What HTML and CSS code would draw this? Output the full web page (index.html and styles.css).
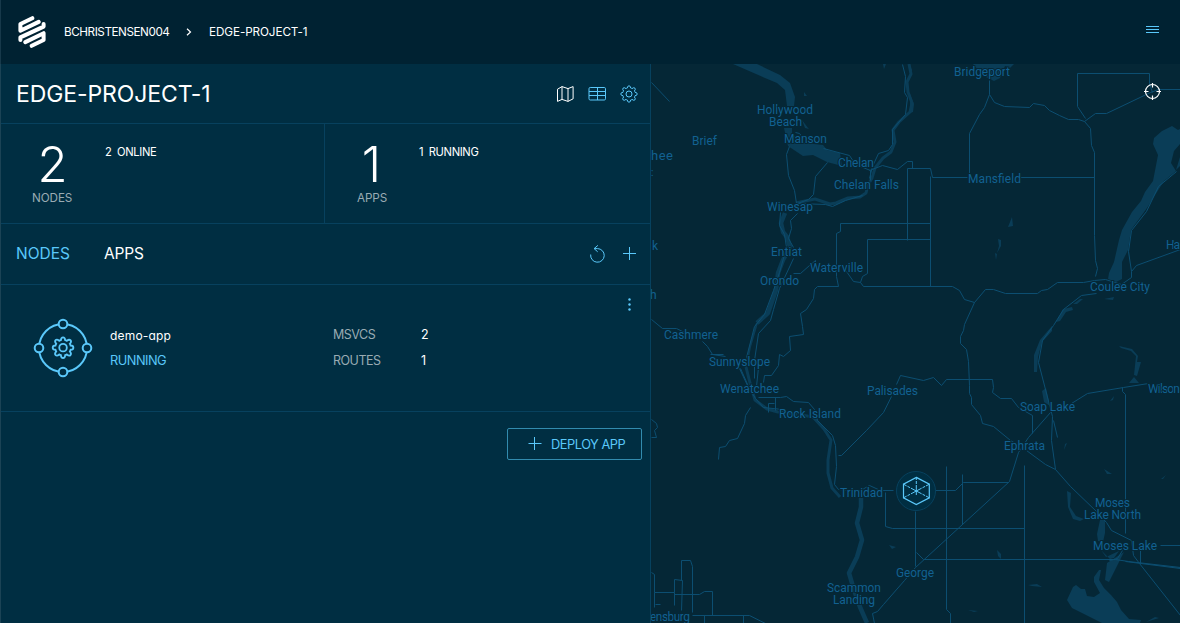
FILE: index.html
```html
<!DOCTYPE html>
<html lang="en">
<head>
<meta charset="utf-8">
<title>EDGE-PROJECT-1</title>
<link rel="stylesheet" href="styles.css">
</head>
<body>
<div class="app">
  <header class="topbar">
    <svg class="logo" viewBox="0 0 28 32" width="28" height="32"><path d="M14.3 2.2 2.4 8V14.8L20.7 5.9M2.4 24V21.4L25.6 10.6V8M7.3 26.1 25.6 17.2V24L13.7 29.8"/></svg>
    <nav class="crumbs">
      <span class="crumb-user">BCHRISTENSEN004</span>
      <svg class="chevron" viewBox="0 0 6 8" width="6" height="8"><path d="M1 .7 4.5 4 1 7.3"/></svg>
      <span class="crumb-project">EDGE-PROJECT-1</span>
    </nav>
    <svg class="menu" viewBox="0 0 13 8" width="13" height="8"><path d="M0 .5H13M0 3.5H13M0 6.5H13"/></svg>
  </header>
  <main class="body">
    <section class="panel">
      <div class="title-row">
        <h1>EDGE-PROJECT-1</h1>
        <div class="views">
          <svg class="icon icon-map" viewBox="0 0 18 18" width="18" height="18"><path d="M1.5 4.2 6 1.6 12 3.6 17.1 1.6V13.8L12 16.4 6 14.4 1.5 16.4ZM6 1.6V14.4M12 3.6V16.4"/></svg>
          <svg class="icon" viewBox="0 0 18 18" width="18" height="18"><rect x="1" y="2.5" width="16.5" height="12.5" rx="1.2"/><path d="M1 6.5H17.5M1 10.5H17.5M9.5 2.5V15"/></svg>
          <svg class="icon" viewBox="0 0 18 18" width="18" height="18"><use href="#gear"/></svg>
        </div>
      </div>
      <div class="stats">
        <div class="stat">
          <div class="total"><strong>2</strong><span class="label">NODES</span></div>
          <span class="detail">2&nbsp; ONLINE</span>
        </div>
        <div class="stat">
          <div class="total"><strong>1</strong><span class="label">APPS</span></div>
          <span class="detail">1&nbsp; RUNNING</span>
        </div>
      </div>
      <div class="tabs">
        <span class="tab tab-active">NODES</span>
        <span class="tab">APPS</span>
        <div class="actions">
          <svg class="icon" viewBox="0 0 18 18" width="18" height="18"><path d="M2.7 9.5A6.8 6.8 0 1 0 9.5 3.6H6.1M9.9 .4 6.1 3.6 9.7 6.8"/></svg>
          <svg class="icon" viewBox="0 0 18 18" width="18" height="18"><path d="M3 8.5H16M9.5 2V15"/></svg>
        </div>
      </div>
      <article class="app-row">
        <svg class="app-icon" viewBox="0 0 60 60" width="60" height="60">
          <circle cx="30" cy="30" r="24"/>
          <g class="hub"><circle cx="30" cy="6" r="4.3"/><circle cx="54" cy="30" r="4.3"/><circle cx="30" cy="54" r="4.3"/><circle cx="6" cy="30" r="4.3"/></g>
          <g transform="translate(18.7 18.3) scale(1.26)"><path id="gear" d="M7.3 3 Q7.5 .8 9 .8T10.7 3Q11.4 3.2 12 3.6 13.8 2.1 14.9 3.1T14.4 6Q14.8 6.6 15 7.3 17.2 7.4 17.2 9T15 10.7Q14.8 11.4 14.4 12 15.9 13.8 14.9 14.9T12 14.4Q11.4 14.8 10.7 15 10.6 17.2 9 17.2T7.3 15Q6.6 14.8 6 14.4 4.2 15.9 3.1 14.9T3.6 12Q3.2 11.4 3 10.7 .8 10.6 .8 9T3 7.3Q3.2 6.6 3.6 6 2.1 4.2 3.1 3.1T6 3.6Q6.6 3.2 7.3 3ZM6 9a3 3 0 1 0 6 0a3 3 0 1 0-6 0"/></g>
        </svg>
        <div class="app-id"><span class="app-name">demo-app</span><span class="state">RUNNING</span></div>
        <dl class="facts"><dt>MSVCS</dt><dd>2</dd><dt>ROUTES</dt><dd>1</dd></dl>
        <svg class="more" viewBox="0 0 4 14" width="4" height="14"><circle cx="2.5" cy="2.5" r="1.2"/><circle cx="2.5" cy="7.5" r="1.2"/><circle cx="2.5" cy="12.5" r="1.2"/></svg>
      </article>
      <div class="footer">
        <button class="deploy"><svg class="icon" viewBox="0 0 14 14" width="14" height="14"><path d="M.5 6.5H13.5M6.5 0V13"/></svg><span>DEPLOY APP</span></button>
      </div>
    </section>
    <section class="map">
      <svg class="canvas" viewBox="651 64 529 559" width="529" height="559">
        <g class="water">
          <path d="M733 64H757L780 75 790 83 795 97 794 106H787L785 90 777 83 765 78Z"/>
          <path d="M784 128H792V134L805 143 823 145 827 150 840 153 842 166 827 162 813 155 803 156 788 146Z"/>
          <path d="M802 120 808 128 809 129 805 128ZM804 92 807 96H804ZM883 64H886L884 69Z"/>
          <path d="M973 64H1014L1010 68 1005 66 1000 78 994 81 986 77 978 70ZM910 66 912 70 911 77 910 77ZM910 94 914 104 913 112 910 113Z"/>
          <path d="M1162 131 1172 126 1178 130 1180 129V144L1174 151 1171 163 1176 171 1164 181 1155 195 1147 208 1131 230 1128 250 1122 262 1122 279 1116 282 1108 279 1109 273 1114 262 1119 240 1122 230 1132 212 1141 201 1145 192 1153 181 1158 155 1153 144 1154 138ZM1180 157 1176 170 1180 166Z"/>
          <path d="M1012 217 1013 226 1008 227ZM998 239 1001 240 1001 246 997 253 999 246ZM995 253 997 254 996 260Z"/>
          <path d="M1034 355 1040 340 1052 326 1052 331 1042 342 1038 357 1037 372H1034ZM1056 322 1063 309 1072 307 1073 310 1066 312 1060 321ZM1073 304 1080 299 1083 299 1077 304ZM1042 391 1046 388 1050 406 1044 402ZM1104 299 1114 297 1113 300Z"/>
          <path d="M1119 346 1132 349 1138 356 1137 362 1141 362 1137 376 1134 375 1136 356 1131 351 1121 348ZM1129 383 1134 377 1139 383ZM1110 401 1114 396 1113 400Z"/>
          <path d="M1067 491 1071 493 1070 507 1076 516 1084 519 1080 521 1073 519 1068 507ZM1100 520 1105 520 1105 533 1103 542 1098 541 1097 534ZM1101 550 1106 557 1119 551 1114 558 1110 559ZM1107 563 1124 552 1120 560 1109 582 1105 580Z"/>
          <path d="M1073 587 1076 585 1081 589 1085 589 1087 596 1094 597 1100 593 1094 582 1094 577 1099 570 1101 570 1099 580 1104 588 1111 595 1117 602 1121 610 1129 619 1141 620 1140 623H1102L1086 615 1072 608 1067 600Z"/>
          <path d="M997 550 1001 554V559L998 556ZM1028 585 1037 584 1042 587 1032 586ZM889 545 896 547 892 549ZM1065 444 1067 443 1064 450ZM1104 469 1112 474H1107ZM1161 479 1166 475 1163 479ZM1155 617 1159 618 1146 622ZM968 610 978 611 974 612Z"/>
        </g>
        <g class="river">
          <path d="M909 64 911 74 907 82 908 92 912 103 910 112 899 122 893 130 895 142 891 152 883 158 875 168 872 178 868 185 866 193 860 197 848 198 836 203 830 204 815 199 805 201 796 203"/>
          <path class="wide" d="M785 213 781 223 783 232 787 237 790 247 783 260 778 273 776 290 768 313 757 323"/>
          <path class="thin" d="M757 323 750 347 746 367"/>
          <path d="M746 367 750 383 755 400 767 409 778 412 795 414 813 417 824 429 831 440 828 460 828 473 832 488 840 497"/>
          <path class="wide" d="M861 498 861 507 857 523 862 540 857 557 849 573 854 590 860 607 867 623"/>
        </g>
        <g class="roads" transform="translate(.5 .5)">
          <path d="M651 82 669 101M902 64 905 76 904 92 907 97 905 114 892 129 892 144 888 150 878 153 872 166 869 178M789 146 786 154 788 175 794 190 796 203M827 162 815 176 813 194 808 199 797 203 825 204 832 206 845 200 862 195M869 170 882 165 897 169 907 161 912 161V168"/>
          <path d="M795 132 799 133 803 138M823 148 849 155 855 164 870 170 870 180M797 213 790 220 791 228 788 238 793 247M780 212 779 225 784 234 786 247 779 272 773 290 764 314 754 326 746 357M793 258 779 288 773 309 770 320 758 333 754 360 754 378M793 273 800 273 809 265 815 260 815 265"/>
          <path d="M907 168H930L932 177H967M1020 177H1094M907 168V240M930 176V286M930 223H840V231L836 233V276L838 286M930 239H867V273L862 276 860 282 853 281 846 271M860 282 863 286H952L959 290 964 299 974 302 985 289 993 289 1005 293H1037L1041 290 1047 289 1057 282 1083 282 1094 280 1105 279 1121 284 1131 277 1131 271 1136 265 1180 249"/>
          <path d="M838 286H817L814 289 813 298 806 309 800 313 802 326 803 334 789 336 790 350 783 356 779 354 778 365 771 375H764L763 382M651 319 662 328H676L686 333M702 341 707 346 712 354 725 356M710 354 723 354M739 368 747 385 755 398 763 407 782 409M740 368 748 386M758 367 756 386M758 397H780L786 396 793 401 808 402 814 409 817 420 832 435 835 445 836 466 834 484 838 489 860 490 869 485 880 490H893M935 490H955L963 482H1008"/>
          <path d="M768 412V403H774M775 397V410M750 407 745 415 744 423 737 438 729 440 725 446 719 447 718 459M651 419 656 423 657 427 654 430 656 437 651 437M838 455 841 455 866 430 883 412 891 396M896 384 900 375 923 380 933 377 941 385 946 379H992L993 387 992 392 1000 398H1011L1018 407 1032 415V433"/>
          <path d="M989 80V94L994 102 1004 106 1029 107 1033 103 1044 105 1049 110 1059 115 1068 119 1078 119 1084 121 1090 128 1091 145 1094 152V235L1095 260 1097 268 1095 276M989 94 984 107 979 114 969 133V177M1077 106V73H1149V83L1152 92M1077 106 1085 118M1084 121 1095 113H1106L1150 92 1158 89H1180"/>
          <path d="M974 302 964 324 963 330 960 336 960 343 966 349 968 361 969 385V393L971 397V404L980 415 982 423 993 426 1010 440 1015 443M1131 230 1128 251 1131 271M1176 171 1158 186 1146 211 1131 230M1096 293 1081 295 1063 309 1053 325 1042 340 1038 362 1052 416 1051 440 1055 469M1071 403 1087 393 1123 387 1148 383M1122 387V391L1125 394V533"/>
          <path d="M1050 412 1028 437 1018 452 1009 481 915 567 904 580 883 604 877 611 872 613 874 623M1053 420 1057 437M1026 450 1045 464 1055 469 1070 486 1096 511 1106 522 1111 530 1131 540 1133 555 1139 563 1180 615M1140 546V563M1160 545H1180M946 466V609L950 613V623H972M962 474V524M1024 465V623M885 492V526L892 528H1024M915 511V566M916 552 923 559 1115 559 1128 561 1180 567M1125 561 1180 568M1109 560 1117 558 1122 550"/>
          <path d="M651 572 654 574V592H674V579L682 580 681 610M674 594H699L704 591H712L712 615M681 580V560H690L692 566V612M674 592V605M654 592V607M655 604H660M692 615H749L765 623M704 615V623M743 615V623"/>
        </g>
        <g class="places">
          <text x="954" y="76" textLength="56">Bridgeport</text>
          <text x="757" y="114" textLength="56">Hollywood</text><text x="769" y="126" textLength="33">Beach</text>
          <text x="784" y="143" textLength="43">Manson</text><text x="692" y="145" textLength="25">Brief</text>
          <text class="town" x="651" y="160" textLength="22">hee</text>
          <text x="838" y="167" textLength="36">Chelan</text><text x="834" y="189" textLength="65">Chelan Falls</text>
          <text x="968" y="183" textLength="53">Mansfield</text><text x="767" y="211" textLength="46">Winesap</text>
          <text x="771" y="256" textLength="31">Entiat</text><text x="810" y="272" textLength="53">Waterville</text>
          <text x="760" y="285" textLength="39">Orondo</text><text x="652" y="250">k</text><text x="650" y="299">h</text>
          <text x="664" y="339" textLength="54">Cashmere</text><text x="709" y="366" textLength="61">Sunnyslope</text>
          <text x="720" y="393" textLength="59">Wenatchee</text><text x="779" y="418" textLength="62">Rock Island</text>
          <text x="867" y="395" textLength="51">Palisades</text><text x="1090" y="291" textLength="60">Coulee City</text>
          <text x="1166" y="249" textLength="14">Ha</text><text x="1148" y="393" textLength="32">Wilson</text>
          <text x="1020" y="411" textLength="55">Soap Lake</text><text x="1004" y="450" textLength="41">Ephrata</text>
          <text x="840" y="497" textLength="43">Trinidad</text><text x="896" y="577" textLength="38">George</text>
          <text x="1095" y="507" textLength="35">Moses</text><text x="1084" y="519" textLength="57">Lake North</text>
          <text x="1093" y="550" textLength="64">Moses Lake</text>
          <text x="827" y="592" textLength="54">Scammon</text><text x="833" y="604" textLength="42">Landing</text>
          <text x="650" y="621" textLength="40">ensburg</text><text class="tiny" x="651" y="176">:</text>
        </g>
        <g class="node"><circle cx="916" cy="491" r="19.5"/><path d="M916.3 477.4 929.3 484.2V497.8L916.3 504.6 903.5 497.8V484.2Z"/><path class="spokes" d="M916.3 491V477.4M916.3 491 903.5 484.2M916.3 491 929.3 484.2M916.3 491 903.5 497.8M916.3 491 929.3 497.8M916.3 491V495"/></g>
        <g class="locate"><circle cx="1152.5" cy="91.5" r="7"/><path d="M1152.5 83V87.5M1152.5 95.5V100M1144 91.5H1148.5M1156.5 91.5H1161"/></g>
      </svg>
    </section>
  </main>
</div>
</body>
</html>
```
FILE: styles.css
```css
* { box-sizing: border-box; }
body { margin: 0; background: #002e42; color: #fff; font-family: Inter, "Liberation Sans", sans-serif; font-feature-settings: "cv11"; overflow: hidden; }
.app { width: 1180px; height: 623px; display: flex; flex-direction: column; }
.topbar { height: 64px; display: flex; align-items: center; padding: 0 20px 0 17px; background: #002232; border-left: 1px solid #17394a; }
.logo { fill: none; stroke: #fff; stroke-width: 4; stroke-linecap: round; stroke-linejoin: round; }
.crumbs { display: flex; align-items: center; margin-left: 18px; font-size: 11.7px; line-height: 16px; }
.crumb-user { width: 105px; letter-spacing: -.44px; }
.crumb-project { letter-spacing: -.08px; white-space: nowrap; }
.chevron { margin: 0 17px 0 17px; fill: none; stroke: #fff; stroke-width: 1.2; }
.menu { margin: 0 1px 5px auto; fill: none; stroke: #5ac8fa; stroke-width: 1; }
.body { flex: 1; display: flex; min-height: 0; }
.panel { width: 651px; background: #002e42; border-left: 1px solid #1b4355; border-right: 1px solid #07415e; display: flex; flex-direction: column; }
.title-row { height: 60px; padding: 0 12px 0 15px; display: flex; align-items: center; justify-content: space-between; border-bottom: 1px solid #07415e; }
h1 { margin: 0; font-size: 23px; font-weight: 400; line-height: 28px; letter-spacing: -.1px; }
.views, .actions { display: flex; gap: 14px; }
.actions { margin-left: auto; }
.icon { display: block; fill: none; stroke: #5ac8fa; stroke-width: 1; stroke-linejoin: round; }
.icon-map { stroke: #fff; }
.stats { height: 100px; display: grid; grid-template-columns: 324px 1fr; border-bottom: 1px solid #07415e; }
.stat { display: flex; padding: 0 0 0 31px; }
.stat:first-child { border-right: 1px solid #07415e; }
.total { width: 73px; height: 99px; padding-top: 17px; display: flex; flex-direction: column; align-items: flex-start; }
.total strong { width: 41px; height: 51px; text-align: center; font-size: 49px; line-height: 47px; font-weight: 300; }
.stat + .stat .total { width: 62px; margin-left: 1px; }
.stat + .stat strong { width: 29px; }
.label { font-size: 11.7px; line-height: 13px; color: #99abb3; letter-spacing: -.1px; }
.detail { padding-top: 21px; font-size: 11.2px; line-height: 15px; letter-spacing: -.36px; }
.tabs { height: 61px; padding: 0 12px 0 15px; display: flex; align-items: center; border-bottom: 1px solid #07415e; }
.tab { font-size: 15.5px; line-height: 20px; letter-spacing: -.2px; }
.tab-active { width: 88px; color: #5ac8fa; letter-spacing: 0; }
.app-row { height: 127px; padding-left: 32px; display: flex; align-items: center; border-bottom: 1px solid #07415e; }
.app-icon { fill: none; stroke: #5ac8fa; stroke-width: 2; }
.app-icon g[transform] { stroke-width: 1.45; }
.hub { fill: #002e42; }
.app-id { width: 223px; margin-left: 17px; display: flex; flex-direction: column; gap: 7px; font-size: 12.8px; line-height: 18px; }
.app-name { font-size: 12px; letter-spacing: .18px; }
.state { color: #5ac8fa; letter-spacing: -.5px; }
.facts { margin: 0; display: grid; grid-template-columns: 88px 40px; row-gap: 8px; font-size: 12.5px; line-height: 18px; }
.facts dt { color: #99abb3; letter-spacing: -.5px; }
.facts dd { margin: 0; }
.more { margin: 0 19px 88px auto; fill: #5ac8fa; }
.footer { padding: 16px 8px; display: flex; justify-content: flex-end; }
.deploy { width: 135px; height: 32px; padding: 0 0 0 20px; display: flex; align-items: center; gap: 9px; border: 1px solid #328bae; border-radius: 2px; background: none; color: #5ac8fa; font: 12.8px Inter, sans-serif; letter-spacing: -.46px; white-space: nowrap; }
.map { width: 529px; background: #052736; }
.canvas { display: block; }
.water { fill: #0a3d57; }
.river { fill: none; stroke: #0a3d57; stroke-width: 3; stroke-linejoin: round; }
.river .wide { stroke-width: 4.5; }
.river .thin { stroke-width: 2; }
.roads { fill: none; stroke: #0c4e71; stroke-width: 1; stroke-linejoin: round; }
.places { fill: #126191; font: 12px Roboto, sans-serif; stroke: #052736; stroke-width: 2px; paint-order: stroke; }
.places .town { font-size: 13px; }
.places .tiny { font-size: 10px; }
.node { fill: #002e42; stroke: #07415e; }
.node path { fill: none; stroke: #5ac8fa; stroke-width: 1.2; }
.node .spokes { stroke-width: 1; stroke-dasharray: 6 1 3 1; }
.locate { fill: none; stroke: #fff; stroke-width: 1.2; }
```
